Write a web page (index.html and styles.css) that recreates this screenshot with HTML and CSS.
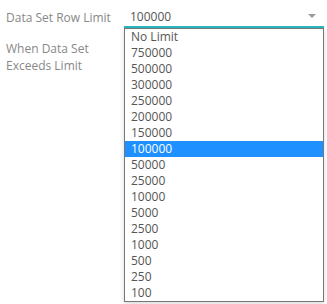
FILE: index.html
```html
<!DOCTYPE html>
<html lang="en">
<head>
    <meta charset="UTF-8">
    <title>Data Set Settings</title>
    <link rel="stylesheet" href="styles.css">
</head>
<body>
    <div class="panel">
        <div class="row">
            <div class="label">Data Set Row Limit</div>
            <div class="field">
                <div class="select">
                    <span class="value">100000</span>
                    <span class="arrow"></span>
                </div>
                <ul class="options">
                    <li>No Limit</li>
                    <li>750000</li>
                    <li>500000</li>
                    <li>300000</li>
                    <li>250000</li>
                    <li>200000</li>
                    <li>150000</li>
                    <li class="selected">100000</li>
                    <li>50000</li>
                    <li>25000</li>
                    <li>10000</li>
                    <li>5000</li>
                    <li>2500</li>
                    <li>1000</li>
                    <li>500</li>
                    <li>250</li>
                    <li>100</li>
                </ul>
            </div>
        </div>
        <div class="row">
            <div class="label">When Data Set Exceeds Limit</div>
            <div class="field"></div>
        </div>
    </div>
</body>
</html>
```

FILE: styles.css
```css
html,
body {
    height: 100%;
}

body {
    margin: 0;
    font-family: "Open Sans", sans-serif;
    font-size: 12px;
    background-color: #fff;
}

.panel {
    padding: 6px 3px 0 6px;
}

.row {
    display: flex;
    margin-bottom: 9px;
}

.label {
    width: 110px;
    flex: none;
    margin-right: 8px;
    color: #888;
    line-height: 17px;
    padding-top: 3px;
}

.field {
    position: relative;
    width: 200px;
}

.select {
    display: flex;
    align-items: center;
    height: 20px;
    padding: 0 8px 0 6px;
    border-bottom: 2px solid #2bb8c2;
}

.value {
    flex: 1;
    color: #555;
}

.arrow {
    width: 0;
    height: 0;
    border-left: 4px solid transparent;
    border-right: 4px solid transparent;
    border-top: 4px solid #999;
}

.options {
    position: absolute;
    top: 22px;
    left: 0;
    right: 0;
    margin: 0;
    padding: 0;
    list-style: none;
    background-color: #fff;
    border: 1px solid #777;
    box-shadow: 0 2px 5px rgba(0, 0, 0, 0.15);
    z-index: 2;
}

.options li {
    height: 16px;
    line-height: 16px;
    padding-left: 6px;
    color: #555;
}

.options li.selected {
    background-color: #1e90ff;
    color: #fff;
}
```
